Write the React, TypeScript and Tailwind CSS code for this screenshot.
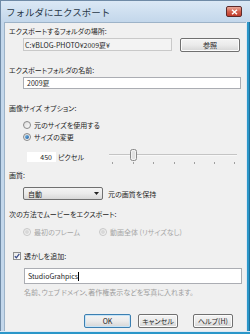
import React from "react";

function Radio({ checked = false, disabled = false }: { checked?: boolean; disabled?: boolean }) {
  return (
    <span
      className={
        "w-[8px] h-[8px] rounded-full border flex items-center justify-center shrink-0 " +
        (disabled
          ? "border-[#c8c8c8] bg-gradient-to-br from-[#e6e6e6] to-[#fafafa]"
          : "border-[#8a8a8a] bg-gradient-to-br from-[#dcdcdc] to-[#fbfbfb]")
      }
    >
      {checked && <span className="w-[4px] h-[4px] rounded-full bg-gradient-to-br from-[#7fc0ec] to-[#1c5a9c]" />}
      {disabled && !checked && <span className="w-[4px] h-[4px] rounded-full bg-[#d8d8d8]" />}
    </span>
  );
}

function Btn({ label, def = false, w }: { label: string; def?: boolean; w: string }) {
  return (
    <div
      className={
        w +
        " h-[14px] rounded-[2px] border flex items-center justify-center bg-gradient-to-b from-[#f4f4f4] via-[#ebebeb] to-[#d6d6d6] " +
        (def ? "border-[#3c7fb1] shadow-[inset_0_0_0_1px_#c6e4f7]" : "border-[#707070] shadow-[inset_0_0_0_1px_#fbfbfb]")
      }
    >
      {label}
    </div>
  );
}

export default function App() {
  return (
    <div className="w-[250px] h-[334px] flex flex-col overflow-hidden bg-[#c3d7eb] font-['Noto_Sans_CJK_JP','Liberation_Sans',sans-serif] text-[7px] leading-[10px] text-[#1e1e1e]">
      {/* title bar */}
      <div className="h-[22px] shrink-0 flex items-center justify-between pl-[5px] pr-[8px] bg-gradient-to-b from-[#dbe8f5] to-[#c3d7eb] border-t border-l border-[#6f8aa6]">
        <span className="text-[9.5px] text-[#283848]">フォルダにエクスポート</span>
        <div className="w-[16px] h-[11px] rounded-[2px] border border-[#5d2a2a] bg-gradient-to-b from-[#e9a99b] via-[#d2604d] to-[#c0392b] flex items-center justify-center">
          <svg width="7" height="6" viewBox="0 0 7 6">
            <path d="M1 0.8 L6 5.2 M6 0.8 L1 5.2" stroke="white" strokeWidth="1.5" />
          </svg>
        </div>
      </div>
      <div className="flex-1 flex min-h-0">
        <div className="w-[4px] bg-[#c3d7eb] border-l border-[#6f8aa6]" />
        <div className="flex-1 bg-[#f0f0f0] flex flex-col pl-[4px] border-t border-l border-[#9db3c8] [font-feature-settings:'palt']">
          <div className="mt-[3px] h-[10px]">エクスポートするフォルダの場所:</div>
          <div className="mt-[2px] ml-[14px] flex items-start gap-[8px]">
            <div className="w-[149px] h-[13px] border border-[#c9c9c9] bg-[#f3f3f3] flex items-center pl-[1px]">
              C:¥BLOG-PHOTO¥2009夏¥
            </div>
            <Btn label="参照" w="w-[60px]" />
          </div>
          <div className="mt-[13px] h-[10px]">エクスポートフォルダの名前:</div>
          <div className="mt-[2px] ml-[14px] w-[218px] h-[12px] border border-[#abadb3] bg-white flex items-center pl-[3px]">2009夏</div>
          <div className="mt-[14px] h-[10px]">画像サイズ オプション:</div>
          <div className="mt-[7px] ml-[14px] h-[10px] flex items-center gap-[3px]">
            <Radio />
            <span>元のサイズを使用する</span>
          </div>
          <div className="mt-[2px] ml-[14px] h-[10px] flex items-center gap-[3px]">
            <Radio checked />
            <span>サイズの変更</span>
          </div>
          <div className="mt-[6px] ml-[18px] h-[18px] flex items-center">
            <div className="w-[29px] h-[10px] bg-white flex items-center justify-end pr-[4px]">450</div>
            <span className="ml-[2px] w-[50px]">ピクセル</span>
            <svg width="130" height="18" viewBox="0 0 130 18" className="block">
              <line x1="1" y1="6.5" x2="129" y2="6.5" stroke="#c4c4c4" strokeWidth="1" />
              <line x1="1" y1="7.5" x2="129" y2="7.5" stroke="#f8f8f8" strokeWidth="1" />
              {[4, 25, 45, 66, 86, 106, 126].map((x) => (
                <line key={x} x1={x + 0.5} y1="14" x2={x + 0.5} y2="16" stroke="#a0a0a0" strokeWidth="1" />
              ))}
              <rect x="22.5" y="1.5" width="6" height="11" rx="2" fill="#f2f2f2" stroke="#8a8a8a" />
              <rect x="24" y="3" width="3" height="8" rx="1" fill="#e2e2e2" />
            </svg>
          </div>
          <div className="mt-[4px] h-[10px]">画質:</div>
          <div className="mt-[7px] ml-[14px] flex items-center">
            <div className="w-[80px] h-[13px] rounded-[2px] border border-[#707070] bg-gradient-to-b from-[#f4f4f4] via-[#ebebeb] to-[#d8d8d8] flex items-center justify-between pl-[4px] pr-[3px]">
              <span>自動</span>
              <svg width="5" height="3" viewBox="0 0 5 3">
                <path d="M0 0 L5 0 L2.5 3 Z" fill="#222" />
              </svg>
            </div>
            <span className="ml-[5px]">元の画質を保持</span>
          </div>
          <div className="mt-[9px] h-[10px]">次の方法でムービーをエクスポート:</div>
          <div className="mt-[8px] ml-[14px] h-[10px] flex items-center text-[#a6a6a6]">
            <Radio checked={false} disabled />
            <span className="ml-[3px] w-[65px]">最初のフレーム</span>
            <Radio disabled />
            <span className="ml-[3px]">動画全体 (リサイズなし)</span>
          </div>
          <div className="mt-[14px] ml-[4px] h-[10px] flex items-center gap-[3px]">
            <span className="w-[8px] h-[8px] border border-[#8e8f8f] bg-gradient-to-br from-[#e8e8e8] to-[#ffffff] flex items-center justify-center">
              <svg width="6" height="6" viewBox="0 0 6 6">
                <path d="M0.8 3.2 L2.4 4.8 L5.3 0.8" stroke="#3c4f8a" strokeWidth="1.3" fill="none" />
              </svg>
            </span>
            <span>透かしを追加:</span>
          </div>
          <div className="mt-[7px] ml-[15px] w-[218px] h-[16px] border border-[#abadb3] bg-white flex items-center pl-[3px]">
            StudioGrahpics
            <span className="w-px h-[9px] bg-black" />
          </div>
          <div className="mt-[3px] ml-[15px] h-[10px] text-[#9d9d9d]">名前、ウェブ ドメイン、著作権表示などを写真に入れます。</div>
          <div className="mt-[17px] flex items-center">
            <div className="ml-[75px]"><Btn label="OK" def w="w-[47px]" /></div>
            <div className="ml-[7px]"><Btn label="キャンセル" w="w-[40px]" /></div>
            <div className="ml-[15px]"><Btn label="ヘルプ(H)" w="w-[40px]" /></div>
          </div>
        </div>
        <div className="w-[4px] flex">
          <div className="w-[1px] bg-[#dce8f4]" />
          <div className="w-[2px] bg-[#2b97c9]" />
          <div className="w-[1px] bg-[#1f6f98]" />
        </div>
      </div>
      <div className="h-[3px] shrink-0 flex flex-col">
        <div className="h-[1px] bg-[#dce8f4]" />
        <div className="h-[2px] bg-[#2b97c9]" />
      </div>
    </div>
  );
}
